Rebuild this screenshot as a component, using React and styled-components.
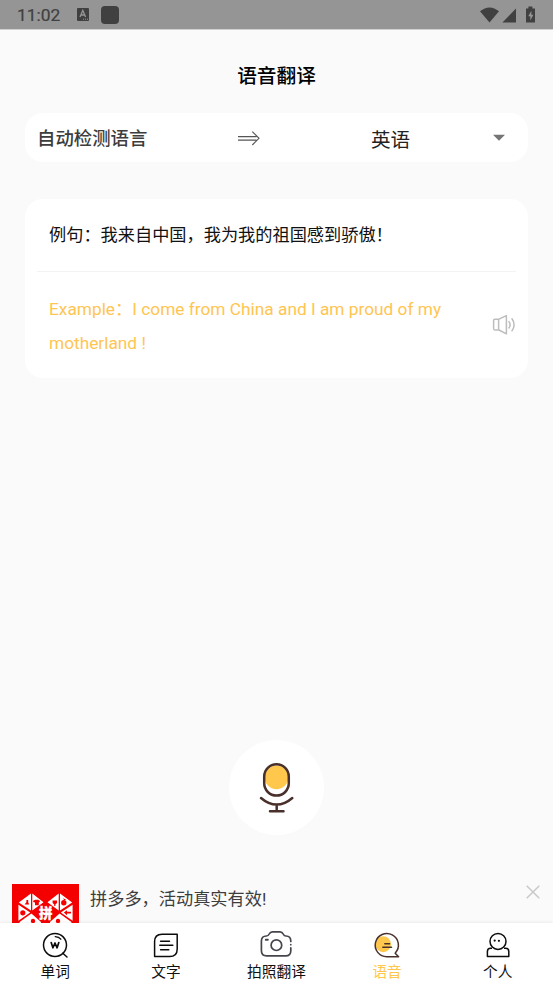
import styled, { createGlobalStyle } from 'styled-components';

const GlobalStyle = createGlobalStyle`
  * {
    box-sizing: border-box;
  }

  body {
    margin: 0;
    background: #fafafa;
    font-family: Roboto, 'Noto Sans CJK SC', sans-serif;
  }

  svg {
    display: block;
    flex-shrink: 0;
  }
`;

function WordIcon() {
  return (
    <svg width='28' height='28' viewBox='0 0 28 28' fill='none' stroke='#0c0c0c' strokeWidth='1.5' strokeLinecap='round'>
      <circle cx='14' cy='14' r='11.5' />
      <path d='M14.2 5.6 Q18 5.8 19.8 8.2' strokeWidth='1.3' />
      <path d='M21.8 22.2 L26 26' />
      <path d='M10.2 11.6 L11.9 16.8 L14 12 L16.1 16.8 L17.8 11.6' strokeWidth='1.7' strokeLinejoin='round' />
    </svg>
  );
}

function TextIcon() {
  return (
    <svg width='28' height='28' viewBox='0 0 28 28' fill='none' stroke='#0c0c0c' strokeWidth='1.5' strokeLinecap='round'>
      <path d='M10 3.2 H25.2 V18 Q25.2 25.6 17.6 25.6 H2.6 V10.6 Q2.6 3.2 10 3.2 Z' strokeLinejoin='round' />
      <path d='M8.6 10.2 H17.5 M7.8 14.3 H20.8 M8.6 18.8 H16.8' />
    </svg>
  );
}

function CameraIcon() {
  return (
    <svg width='34' height='28' viewBox='0 0 34 28' fill='none' stroke='#45464c' strokeWidth='1.7' strokeLinecap='round' strokeLinejoin='round'>
      <path d='M31.8 10.4 V10 Q31.8 5.2 27 5 Q25.1 5 24.2 3 Q23.2 .9 21 .9 H13.4 Q11.2 .9 10.2 3 Q9.3 5 7.4 5 Q2.4 5.2 2.4 10 V19.5 Q2.4 24.9 7.6 24.9 H26.6 Q31.8 24.9 31.8 19.7 V16.8' />
      <path d='M31.8 13.5 V13.7' />
      <circle cx='17.4' cy='14.2' r='5.3' />
      <path d='M6.8 8.8 H8.8' strokeWidth='2' />
    </svg>
  );
}

function VoiceIcon() {
  return (
    <svg width='28' height='28' viewBox='0 0 28 28' fill='none' stroke='#49302b' strokeWidth='1.5' strokeLinecap='round'>
      <ellipse cx='10.2' cy='13.2' rx='7.8' ry='8' fill='#ffc84d' stroke='none' />
      <path d='M22.3 22 A11.6 11.6 0 1 0 14 25.7 H25.6 L22.2 22.2' strokeLinejoin='round' />
      <path d='M11.8 12.8 H16.6 M9.8 16.2 H18.5' />
    </svg>
  );
}

function PersonIcon() {
  return (
    <svg width='28' height='28' viewBox='0 0 28 28' fill='none' stroke='#0c0c0c' strokeWidth='1.5'>
      <circle cx='14' cy='10.4' r='8' />
      <path d='M8 17.3 H6.6 Q3.4 17.3 3.4 20.5 V25.6 H24.8 V20.5 Q24.8 17.3 21.6 17.3 H20' strokeLinejoin='round' />
      <circle cx='10.7' cy='9.6' r='1.1' fill='#0c0c0c' stroke='none' />
      <circle cx='14.9' cy='9.8' r='1.1' fill='#0c0c0c' stroke='none' />
    </svg>
  );
}

function StatusIcons() {
  return (
    <svg width='56' height='18' viewBox='0 0 56 18' fill='#404040'>
      <path d='M0 5.2 Q9.5 -2.4 19 5.2 L9.5 16.6 Z' />
      <path d='M36 2.6 V16.6 H22.4 Z' />
      <path d='M48.4 .6 H52.4 V2.4 H55 V16.6 H46 V2.4 H48.4 Z' />
      <path d='M51.4 4.8 L48.2 10.2 H50.3 V14.4 L53.4 8.8 H51.4 Z' fill='#959595' />
    </svg>
  );
}

function SpeakerIcon() {
  return (
    <svg width='24' height='22' viewBox='0 0 24 22' fill='none' stroke='#bdbdbd' strokeWidth='1.5' strokeLinejoin='round'>
      <path d='M7 5.2 H3 Q1.6 5.2 1.6 6.8 V14.6 Q1.6 16 3 16 H7 L14.4 19.8 V1.6 Z' />
      <path d='M6.6 5.4 V15.8' />
      <path d='M17 7.6 Q19.2 10.7 17 14' strokeLinecap='round' />
      <path d='M20 4.8 Q24.2 10.7 20 16.8' strokeLinecap='round' />
    </svg>
  );
}

function MicIcon() {
  return (
    <svg width='36' height='52' viewBox='0 0 36 52' fill='none' stroke='#49302b' strokeWidth='2.5' strokeLinecap='round'>
      <circle cx='17.5' cy='15.4' r='11.8' fill='#ffc84d' stroke='none' />
      <rect x='5.2' y='2.2' width='24.6' height='31.4' rx='12.3' />
      <path d='M2 36 Q9.7 42.6 17.7 42.6 Q25.7 42.6 33.3 36 M17.7 42.6 V49 M11 49.2 H24.5' />
    </svg>
  );
}

// ad thumbnail, its lower part is cut off by the tab bar
function AdLogo() {
  return (
    <svg width='67' height='67' viewBox='0 0 67 67'>
      <rect width='67' height='67' fill='#f50000' />
      <g fill='#fff'>
        <path d='M6.8 18.6 L19 9.5 V26.6 Z M20.3 9.5 L31.5 18.2 L20.3 26.6 Z' />
        <path d='M35.5 18.2 L46.7 9.5 V26.6 Z M48 9.5 L60.2 18.6 L48 26.6 Z' />
        <path d='M6.4 20.8 L18.2 28.4 L6.4 36.8 Z M60.6 20.8 L48.8 28.4 L60.6 36.8 Z' />
        <path d='M7.6 38 L19.4 29.5 L29 38 V56 L7.6 44 Z M59.4 38 L47.6 29.5 L38 38 V56 L59.4 44 Z' />
      </g>
      <g fill='#f50000'>
        <path d='M14.4 16 H16.2 V18.2 L17.2 20.6 H12.6 L14.4 18.2 Z' />
        <path d='M21.2 16.8 L23.2 15.8 H26.4 L28.2 17.2 L26.8 18.6 V21.2 H23 V18.6 L21.2 18 Z' />
        <path d='M40.6 16.4 H45 V19 L43.4 20.6 V22 H42.2 V20.6 L40.6 19 Z' />
        <circle cx='51.8' cy='18.8' r='2.7' />
        <path d='M51 14.2 L54 15.4 L52.4 16.5 Z' />
        <circle cx='10.8' cy='28.8' r='2.6' />
        <path d='M51.8 28.6 L55 26.2 V27.8 H59 V29.6 H55 V31.2 Z' />
        <circle cx='21' cy='37' r='2.2' />
        <circle cx='46' cy='37' r='2.2' />
      </g>
      <text
        x='33.7'
        y='33.8'
        textAnchor='middle'
        fontSize='13.5'
        fontWeight='900'
        fill='#fff'
        stroke='#fff'
        strokeWidth='.3'
      >
        拼
      </text>
    </svg>
  );
}

const tabs = [
  { name: '单词', icon: <WordIcon /> },
  { name: '文字', icon: <TextIcon /> },
  { name: '拍照翻译', icon: <CameraIcon /> },
  { name: '语音', icon: <VoiceIcon />, active: true },
  { name: '个人', icon: <PersonIcon /> },
];

function App() {
  return (
    <Screen>
      <GlobalStyle />
      <StatusBar>
        <Clock>11:02</Clock>
        <svg width='12' height='13' viewBox='0 0 12 13'>
          <rect width='12' height='13' rx='1' fill='#404040' />
          <path d='M3 9 L5.8 2.5 L8.6 9 M4 7 H7.7' stroke='#959595' strokeWidth='1.3' fill='none' />
          <path d='M6 11.2 H11' stroke='#959595' strokeDasharray='1 1' />
        </svg>
        <AppBadge />
        <StatusIcons />
      </StatusBar>

      <Title>语音翻译</Title>

      <LanguageBar>
        <SourceLanguage>自动检测语言</SourceLanguage>
        <svg width='24' height='17' viewBox='0 0 24 17' fill='none' stroke='#555' strokeWidth='1.1'>
          <path d='M1 7.6 H19.5 M1 11.1 H19.5 M15.3 2.6 L22 9.3 L15.3 16' />
        </svg>
        <TargetLanguage>英语</TargetLanguage>
        <svg width='12' height='7' viewBox='0 0 12 7'>
          <path d='M0 .7 H12 L6 6.7 Z' fill='#757575' />
        </svg>
      </LanguageBar>

      <ExampleCard>
        <Sentence>例句：我来自中国，我为我的祖国感到骄傲！</Sentence>
        <Translation>
          <p>Example：I come from China and I am proud of my<br />motherland !</p>
          <SpeakerIcon />
        </Translation>
      </ExampleCard>

      <RecordArea>
        <RecordButton aria-label='录音'>
          <MicIcon />
        </RecordButton>
      </RecordArea>

      <AdBanner>
        <AdLogo />
        <AdText>拼多多，活动真实有效!</AdText>
        <CloseButton aria-label='关闭'>
          <svg width='14' height='14' viewBox='0 0 14 14' stroke='#c9c9c9' strokeWidth='1.5'>
            <path d='M.7 .7 L13.3 13.3 M13.3 .7 L.7 13.3' />
          </svg>
        </CloseButton>
      </AdBanner>

      <TabBar>
        {tabs.map((tab) => (
          <Tab key={tab.name} $active={tab.active}>
            {tab.icon}
            <span>{tab.name}</span>
          </Tab>
        ))}
      </TabBar>
    </Screen>
  );
}

const Screen = styled.div`
  display: flex;
  flex-direction: column;
  height: 984px;
  overflow: hidden;
  background: #fafafa;
`;

const StatusBar = styled.div`
  display: flex;
  align-items: center;
  flex-shrink: 0;
  height: 30px;
  padding: 0 17px;
  background: #959595;
  border-bottom: 1px solid #d2d0d0;

  svg:last-child {
    margin-left: auto;
  }
`;

const Clock = styled.span`
  width: 60px;
  padding-top: 1px;
  font-size: 17.4px;
  font-weight: 400;
  color: #404040;
  -webkit-text-stroke: 0.2px #404040;
`;

const AppBadge = styled.div`
  width: 18px;
  height: 18px;
  margin-left: 12px;
  border-radius: 4px;
  background: #404040;
`;

const Title = styled.h1`
  flex-shrink: 0;
  height: 83px;
  margin: 0;
  padding-top: 31px;
  font-size: 19.7px;
  font-weight: 500;
  line-height: 31px;
  text-align: center;
  color: #000;
`;

const LanguageBar = styled.div`
  display: flex;
  align-items: center;
  flex-shrink: 0;
  height: 49px;
  margin: 0 25px;
  padding: 0 23px 0 12px;
  border-radius: 18px;
  background: #fff;
`;

const SourceLanguage = styled.div`
  width: 200px;
  padding-bottom: 2px;
  font-size: 18.4px;
  font-weight: 500;
  color: #3d3d3d;
`;

const TargetLanguage = styled.div`
  flex: 1;
  padding: 1px 0 0 110px;
  font-size: 19.6px;
  color: #222;
`;

const ExampleCard = styled.div`
  flex-shrink: 0;
  height: 179px;
  margin: 37px 25px 0;
  padding: 0 12px;
  border-radius: 18px;
  background: #fff;
  font-size: 17.2px;
`;

const Sentence = styled.div`
  height: 73px;
  padding-left: 12px;
  border-bottom: 1px solid #f3f3f3;
  line-height: 73px;
  color: #111;
`;

const Translation = styled.div`
  display: flex;
  align-items: center;
  justify-content: space-between;
  height: 106px;
  padding-left: 12px;
  line-height: 34px;
  font-size: 17.3px;
  white-space: nowrap;
  color: #ffc552;

  p {
    margin: 0;
    padding-top: 2px;
  }
`;

const RecordArea = styled.div`
  display: flex;
  flex: 1;
  align-items: flex-end;
  justify-content: center;
  padding-bottom: 49px;
`;

const RecordButton = styled.button`
  display: flex;
  align-items: center;
  justify-content: center;
  width: 95px;
  height: 95px;
  padding: 0;
  border: none;
  border-radius: 50%;
  background: #fff;
`;

const AdBanner = styled.div`
  display: flex;
  flex-shrink: 0;
  height: 39px;
  padding: 0 13px 0 12px;
  overflow: hidden;
`;

const AdText = styled.div`
  flex: 1;
  padding-left: 11px;
  font-size: 17.2px;
  line-height: 31px;
  color: #3d3d3d;
`;

const CloseButton = styled.button`
  align-self: flex-start;
  padding: 1px 0 0;
  border: none;
  background: none;
`;

const TabBar = styled.nav`
  display: grid;
  grid-template-columns: repeat(5, 1fr);
  flex-shrink: 0;
  height: 61px;
  background: #fff;
  box-shadow: 0 -1px 3px rgba(0, 0, 0, 0.06);
`;

const Tab = styled.div`
  display: flex;
  flex-direction: column;
  align-items: center;
  padding-top: 8px;
  font-size: 14.7px;
  line-height: 26px;
  color: ${(props) => (props.$active ? '#ffc84d' : '#111')};
`;

export default App;
